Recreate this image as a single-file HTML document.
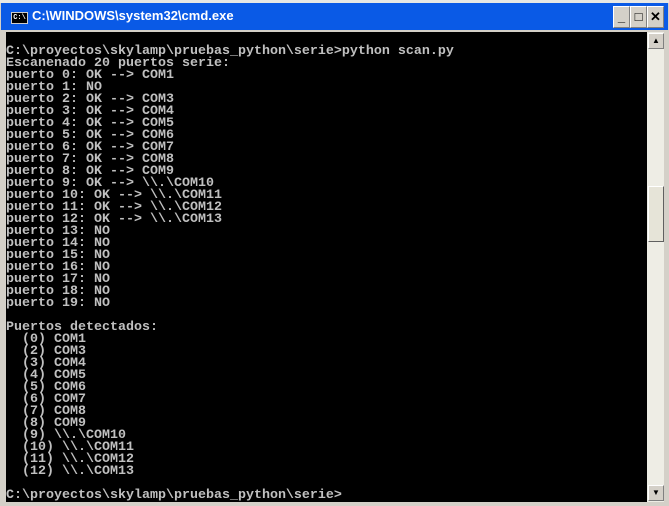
<!DOCTYPE html><html><head><style>
body{margin:0;width:669px;height:506px;background:#d4d0c8;position:relative;overflow:hidden;font-family:"Liberation Sans",sans-serif}
.top{position:absolute;left:0;top:0;width:669px;height:3px;background:#e8e8e4}
.title{position:absolute;left:1px;top:3px;width:667px;height:27px;background:#0a5ae6}
.title span{position:absolute;left:31px;top:5px;color:#fff;font-weight:bold;font-size:13px}
.icon{position:absolute;left:10px;top:9px;width:15px;height:10px;background:#000;border:1px solid #ccc;color:#fff;font:bold 7px "Liberation Mono",monospace;line-height:10px;text-align:center}
.btn{position:absolute;top:6px;width:15px;height:20px;background:#d4d0c8;border:1px solid #fff;border-right-color:#808080;border-bottom-color:#808080;font:bold 13px "Liberation Sans",sans-serif;text-align:center;line-height:20px;color:#000}
.con{position:absolute;left:6px;top:32px;width:641px;height:470px;background:#000}
pre{margin:0;padding-top:14px;color:#c0c0c0;font:bold 13.33px/12px "Liberation Mono",monospace}
.sb{position:absolute;left:647px;top:32px;width:17px;height:470px;background:#eeede5}
.arr{position:absolute;left:1px;width:14px;height:14px;background:#d4d0c8;border:1px solid #fff;border-right-color:#808080;border-bottom-color:#808080;font-size:8px;text-align:center;line-height:14px}
.thumb{position:absolute;left:1px;top:154px;width:14px;height:54px;background:#e6e4d8;border:1px solid #fff;border-right-color:#606060;border-bottom-color:#606060}
</style></head><body>
<div class="top"></div>
<div class="title"><div class="icon">C:\</div><span>C:\WINDOWS\system32\cmd.exe</span></div>
<div class="btn" style="left:613px">_</div>
<div class="btn" style="left:630px">□</div>
<div class="btn" style="left:647px">✕</div>
<div class="con"><pre>C:\proyectos\skylamp\pruebas_python\serie>python scan.py
Escanenado 20 puertos serie:
puerto 0: OK --> COM1
puerto 1: NO
puerto 2: OK --> COM3
puerto 3: OK --> COM4
puerto 4: OK --> COM5
puerto 5: OK --> COM6
puerto 6: OK --> COM7
puerto 7: OK --> COM8
puerto 8: OK --> COM9
puerto 9: OK --> \\.\COM10
puerto 10: OK --> \\.\COM11
puerto 11: OK --> \\.\COM12
puerto 12: OK --> \\.\COM13
puerto 13: NO
puerto 14: NO
puerto 15: NO
puerto 16: NO
puerto 17: NO
puerto 18: NO
puerto 19: NO

Puertos detectados:
  (0) COM1
  (2) COM3
  (3) COM4
  (4) COM5
  (5) COM6
  (6) COM7
  (7) COM8
  (8) COM9
  (9) \\.\COM10
  (10) \\.\COM11
  (11) \\.\COM12
  (12) \\.\COM13

C:\proyectos\skylamp\pruebas_python\serie></pre></div>
<div class="sb"><div class="arr" style="top:1px">▲</div><div class="thumb"></div><div class="arr" style="top:453px">▼</div></div>
</body></html>
